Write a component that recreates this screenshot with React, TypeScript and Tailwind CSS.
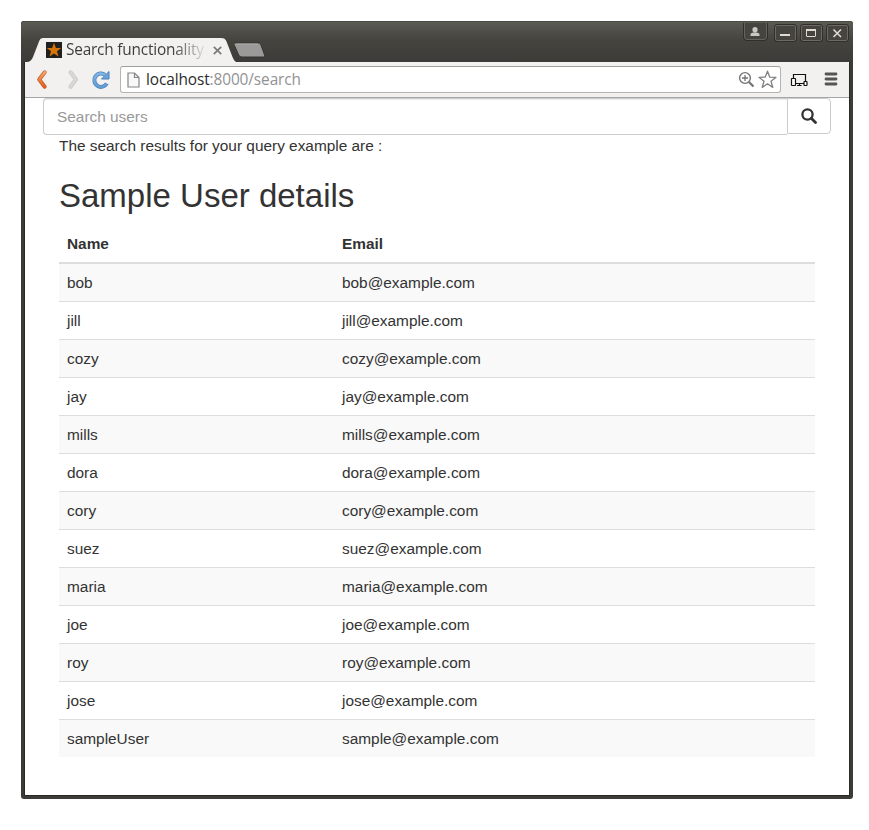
const users: [string, string][] = [
  ['bob', 'bob@example.com'],
  ['jill', 'jill@example.com'],
  ['cozy', 'cozy@example.com'],
  ['jay', 'jay@example.com'],
  ['mills', 'mills@example.com'],
  ['dora', 'dora@example.com'],
  ['cory', 'cory@example.com'],
  ['suez', 'suez@example.com'],
  ['maria', 'maria@example.com'],
  ['joe', 'joe@example.com'],
  ['roy', 'roy@example.com'],
  ['jose', 'jose@example.com'],
  ['sampleUser', 'sample@example.com'],
];

function WindowButton({ kind }: { kind: 'min' | 'max' | 'close' }) {
  return (
    <svg width="23" height="18" viewBox="0 0 23 18" fill="none">
      <rect x="1.5" y="1.5" width="20" height="15" rx="1.5" fill="#45443f" stroke="#6b6a64" />
      <rect x="0.5" y="0.5" width="22" height="17" rx="2.5" stroke="#302f2b" />
      {kind === 'min' && <path d="M6 11h10" stroke="#dfdbd2" strokeWidth="2" />}
      {kind === 'max' && (
        <>
          <rect x="6.500" y="5.500" width="9" height="7" rx=".5" stroke="#dfdbd2" />
          <path d="M6 6h10" stroke="#dfdbd2" strokeWidth="2" />
        </>
      )}
      {kind === 'close' && <path d="M7.500 5.500l7.500 7.500M15 5.500l-7.500 7.500" stroke="#dfdbd2" strokeWidth="1.6" />}
    </svg>
  );
}

function TitleBar() {
  return (
    <div className="relative z-10 flex h-[41px] items-end rounded-t-[3px] border-t border-[#4b4b45] bg-linear-to-b from-[#5b5b54] via-[#45443f] via-45% to-[#3c3b37] pl-[4px]">
      <div className="relative h-6 w-[213px] shrink-0">
        <svg className="absolute inset-0" width="213" height="24" viewBox="0 0 213 24">
          <path
            d="M0 24.5C5 24 6.5 22.5 8 19L14 3.5C15 1 16 0 18.5 0H196C199 0 200.5 1 201.5 3.5L207.5 19C209 22.5 210 24 213 24.5Z"
            fill="#f2f1f0"
          />
        </svg>
        <div className="relative flex h-full items-center pl-[21px]">
          <svg className="shrink-0" width="16" height="16" viewBox="0 0 16 16">
            <rect width="16" height="16" fill="#202020" />
            <path d="M8 .8l1.9 5.100 5.300.1-4.200 3.300 1.500 5.300L8 11.500l-4.500 3.100L5 9.300.8 6l5.300-.1z" fill="#d47409" />
          </svg>
          <span className="ml-1 w-[139px] shrink-0 overflow-hidden whitespace-nowrap bg-linear-to-r from-[#3c3b38] from-76% to-[#e3e2e1] bg-clip-text font-['Open_Sans',sans-serif] text-[15.4px] leading-5 tracking-[-0.2px] text-transparent">
            Search functionality
          </span>
          <svg className="ml-[8px] shrink-0" width="9" height="9" viewBox="0 0 9 9">
            <path d="M.8.8l7.400 7.400M8.200.8L.8 8.200" stroke="#7b7a78" strokeWidth="1.7" />
          </svg>
        </div>
      </div>
      <svg className="mb-1 ml-[-5px]" width="33" height="16" viewBox="0 0 33 16">
        <path d="M2 1h23c1.500 0 2.500.6 3 2l3.500 10c.4 1.300 0 2-1.200 2H9c-1.500 0-2.700-.7-3.300-2L1 2.500C.7 1.500 1 1 2 1z" fill="#9b9a98" stroke="#353430" />
        <path d="M3 2h22" stroke="#aaa9a7" />
      </svg>
      <div className="ml-auto mr-[4px] flex self-start pt-[1px]">
        <svg className="mr-[6px]" width="25" height="19" viewBox="0 0 25 19" fill="none">
          <path d="M.5 0v15.500l2 2h20l2-2V0" fill="#45443f" stroke="#302f2b" />
          <path d="M1.500 0v14.500l2 2h18l2-2V0" stroke="#65645e" />
          <circle cx="12" cy="6.700" r="2.600" fill="#cac8c2" />
          <path d="M7.500 13v-1.500c0-1 .6-1.500 2-1.800l2.500-.4 2.500.4c1.400.3 2 .8 2 1.800V13z" fill="#cac8c2" />
        </svg>
        <div className="flex gap-[3px] pt-px">
          <WindowButton kind="min" />
          <WindowButton kind="max" />
          <WindowButton kind="close" />
        </div>
      </div>
    </div>
  );
}

function Toolbar() {
  return (
    <div className="flex h-[36px] items-center rounded-tr-[3px] border-b border-[#a6a6a8] bg-[#f2f1f0] pl-[10px]">
      <svg className="shrink-0" width="84" height="24" viewBox="0 0 84 24" fill="none">
        <defs>
          <linearGradient id="back" gradientUnits="userSpaceOnUse" x1="0" y1="3" x2="0" y2="20">
            <stop stopColor="#f5aa6c" />
            <stop offset="1" stopColor="#e2571c" />
          </linearGradient>
          <linearGradient id="reload" gradientUnits="userSpaceOnUse" x1="0" y1="3" x2="0" y2="21">
            <stop stopColor="#86bbe8" />
            <stop offset="1" stopColor="#5e98d2" />
          </linearGradient>
        </defs>
        <path d="M9.700 4.300L4.200 11.500 9.700 18.700" stroke="#b9602f" strokeWidth="4" strokeLinecap="round" strokeLinejoin="round" />
        <path d="M9.700 4.300L4.200 11.500 9.700 18.700" stroke="url(#back)" strokeWidth="2.800" strokeLinecap="round" strokeLinejoin="round" />
        <path d="M35.500 4.300L41 11.500 35.500 18.700" stroke="#c6c5c3" strokeWidth="4" strokeLinecap="round" strokeLinejoin="round" />
        <path d="M35.500 4.300L41 11.500 35.500 18.700" stroke="#d9d8d6" strokeWidth="2.800" strokeLinecap="round" strokeLinejoin="round" />
        <path d="M70 6.800A6.700 6.700 0 1 0 71.800 15.500" stroke="#4a80ba" strokeWidth="4" />
        <path d="M74 3.500v7.500h-7.500l2.600-2.600 2.300-2.300z" fill="#6ba5db" stroke="#4a80ba" strokeLinejoin="round" />
        <path d="M70 6.800A6.700 6.700 0 1 0 71.500 15.900" stroke="url(#reload)" strokeWidth="2.600" />
      </svg>
      <div className="ml-px flex h-[27px] w-[661px] shrink-0 items-center rounded-[3px] border border-[#b5b4b3] border-t-[#a0a09f] bg-white pl-[6px]">
        <svg width="13" height="16" viewBox="0 0 13 16" fill="none">
          <path d="M1 1h6.500L12 5.500V15H1z" fill="#f8f8f8" stroke="#858585" strokeWidth="1.2" />
          <path d="M7.500 1v4.500H12" stroke="#858585" strokeWidth="1.2" />
        </svg>
        <span className="ml-[6px] whitespace-nowrap font-['Open_Sans',sans-serif] text-[15.400px] leading-5 tracking-[-0.1px] text-[#2b2b2b]">
          localhost<span className="text-[#929292]">:8000/search</span>
        </span>
        <svg className="ml-auto mr-[3px]" width="17" height="17" viewBox="0 0 17 17" fill="none" stroke="#737373">
          <circle cx="7" cy="7" r="5.400" strokeWidth="1.4" />
          <path d="M7 4v6M4 7h6" strokeWidth="1.3" />
          <path d="M11 11l4.500 4.500" strokeWidth="2.2" />
        </svg>
        <svg className="mr-[3px]" width="19" height="19" viewBox="0 0 19 19" fill="none">
          <path d="M9.500 1.200l2.200 5.900 6.300.2-5 3.900 1.800 6.200-5.300-3.600-5.300 3.600L6 11.200 1 7.300l6.300-.2z" stroke="#808080" strokeWidth="1.300" strokeLinejoin="round" />
        </svg>
      </div>
      <svg className="ml-[9px] shrink-0" width="19" height="14" viewBox="0 0 19 14" fill="none" stroke="#111">
        <path d="M3.500 5.500v-4h12V8M6 10.500h8M7 12.500h4.500M9.500 10.500v2" strokeWidth="1.200" />
        <rect x="1.500" y="5.500" width="4" height="7" rx=".5" fill="#fff" strokeWidth="1.200" />
        <rect x="14" y="8.500" width="3" height="4" rx=".5" fill="#fff" strokeWidth="1.200" />
      </svg>
      <svg className="mb-px ml-[15px] shrink-0" width="14" height="14" viewBox="0 0 14 14">
        <path d="M2 2h10M2 7h10M2 12h10" stroke="#555" strokeWidth="2.800" strokeLinecap="round" />
      </svg>
    </div>
  );
}

export default function App() {
  return (
    <div className="h-[830px] w-[869px] bg-white pl-[21px] pt-[21px]">
      <div className="h-[778px] w-[832px] rounded-[3px] bg-[#3c3b37]">
        <TitleBar />
        <div className="ml-1 h-[733px] w-[824px] bg-white shadow-[0_0_0_1px_#292926]">
          <Toolbar />
          <div className="ml-[18px] flex w-[788px] font-['Liberation_Sans',Arial,sans-serif] text-[#333]">
            <div className="flex h-[37px] w-[744px] items-center rounded-l-[4px] border border-r-0 border-[#ccc] pl-[13px] text-[15.4px] text-[#999] shadow-[inset_0_1px_1px_rgba(0,0,0,0.075)]">
              Search users
            </div>
            <button className="flex h-[36px] w-[44px] items-center justify-center rounded-r-[4px] border border-[#ccc] bg-white">
              <svg className="mb-px" width="16" height="16" viewBox="0 0 16 16" fill="none" stroke="#333">
                <circle cx="6.500" cy="6.500" r="5.100" strokeWidth="2.300" />
                <path d="M10.300 10.300l4.200 4.200" strokeWidth="2.800" strokeLinecap="round" />
              </svg>
            </button>
          </div>
          <main className="ml-[34px] w-[756px] font-['Liberation_Sans',Arial,sans-serif] text-[15.4px] leading-[22px] text-[#333]">
            <p>The search results for your query example are :</p>
            <h2 className="mt-[21px] text-[33px] leading-[36px]">Sample User details</h2>
            <div className="mt-[11px]">
              <div className="flex h-[39px] border-b-2 border-[#ddd] pt-[8px] font-bold">
                <div className="w-[275px] pl-2">Name</div>
                <div className="pl-2">Email</div>
              </div>
              {users.map(([name, email], i) => (
                <div
                  key={name}
                  className={`flex pt-2 ${i === 0 ? 'h-[37px]' : 'h-[38px] border-t border-[#ddd]'} ${i % 2 === 0 ? 'bg-[#f9f9f9]' : 'bg-white'}`}
                >
                  <div className="w-[275px] pl-2">{name}</div>
                  <div className="pl-2">{email}</div>
                </div>
              ))}
            </div>
          </main>
        </div>
      </div>
    </div>
  );
}
